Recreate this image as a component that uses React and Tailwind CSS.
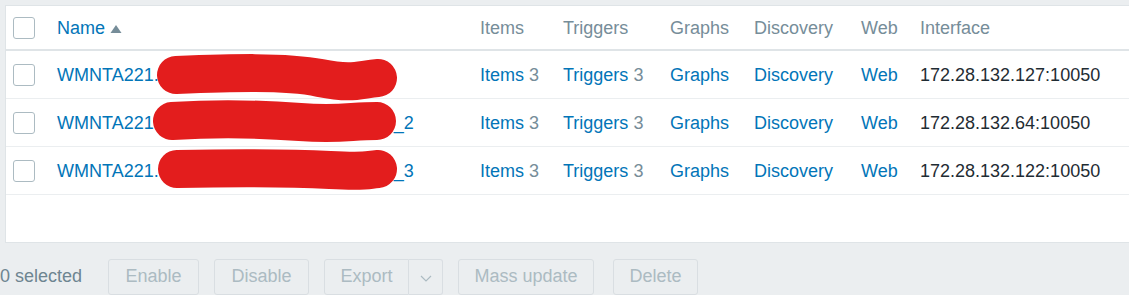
import React from "react";

const cols = "grid grid-cols-[51px_423px_83px_107px_84px_107px_59px_1fr] items-center";

function Checkbox() {
  return <div className="w-[22px] h-[22px] ml-[7px] border border-[#acbbc2] rounded-[3px] bg-white" />;
}

const rows = [
  { pre: "WMNTA221.", gap: 235, suf: "", ip: "172.28.132.127:10050" },
  { pre: "WMNTA221.", gap: 235, suf: "_2", ip: "172.28.132.64:10050" },
  { pre: "WMNTA221.", gap: 235, suf: "_3", ip: "172.28.132.122:10050" },
];

function Btn({ children, className = "" }) {
  return (
    <div className={"h-[36px] pb-[3px] flex items-center justify-center border border-[#d9dee2] rounded-[3px] text-[#acbbc2] bg-[#ebeef0] " + className}>
      {children}
    </div>
  );
}

export default function App() {
  return (
    <div
      className="relative w-full h-[295px] overflow-hidden bg-[#ebeef0] text-[18px] leading-none"
      style={{ fontFamily: '"Liberation Sans", Arial, sans-serif' }}
    >
      <div className="mt-[5px] ml-[5px] bg-white border border-r-0 border-[#dfe4e7]">
        <div className={cols + " h-[45px] border-b-2 border-[#dfe4e7] text-[#768d99]"}>
          <div><Checkbox /></div>
          <div className="flex items-center">
            <span className="text-[#0275b8]">Name</span>
            <svg width="12" height="10" viewBox="0 0 12 10" className="ml-[5px] mt-[2px]">
              <path d="M6 1 L11.5 9 L0.5 9 Z" fill="#768d99" />
            </svg>
          </div>
          <div>Items</div>
          <div>Triggers</div>
          <div>Graphs</div>
          <div>Discovery</div>
          <div>Web</div>
          <div>Interface</div>
        </div>
        {rows.map((r, i) => (
          <div key={i} className={cols + " h-[48px] border-b border-[#ebeef0]"}>
            <div><Checkbox /></div>
            <div className="flex items-center text-[#0275b8] whitespace-nowrap">
              <span>{r.pre}</span>
              <span className="inline-block" style={{ width: r.gap }} />
              <span>{r.suf}</span>
            </div>
            <div><span className="text-[#0275b8]">Items</span> <span className="text-[#768d99]">3</span></div>
            <div><span className="text-[#0275b8]">Triggers</span> <span className="text-[#768d99]">3</span></div>
            <div className="text-[#0275b8]">Graphs</div>
            <div className="text-[#0275b8]">Discovery</div>
            <div className="text-[#0275b8]">Web</div>
            <div className="text-[#1f2c33]">{r.ip}</div>
          </div>
        ))}
        <div className="h-[47px]" />
      </div>
      <div className="flex items-center mt-[16px]">
        <span className="text-[#6e8591] w-[108px] -mt-[3px]">0 selected</span>
        <Btn className="w-[91px]">Enable</Btn>
        <Btn className="w-[95px] ml-[15px]">Disable</Btn>
        <div className="flex ml-[15px]">
          <Btn className="w-[85px] rounded-r-none">Export</Btn>
          <Btn className="w-[34px] rounded-l-none border-l-0">
            <svg width="12" height="7" viewBox="0 0 12 7" className="mt-[6px]">
              <path d="M1 1 L6 6 L11 1" fill="none" stroke="#acbbc2" strokeWidth="1.2" />
            </svg>
          </Btn>
        </div>
        <Btn className="w-[136px] ml-[15px]">Mass update</Btn>
        <Btn className="w-[85px] ml-[19px]">Delete</Btn>
      </div>
      <svg className="absolute top-0 left-0 pointer-events-none" width="1129" height="295">
        <g fill="none" stroke="#e31d1d" strokeLinecap="round" strokeWidth="38">
          <path d="M176 75 C 230 73, 285 71, 320 78 S 360 79, 378 78" />
          <path d="M172 121 C 220 118, 260 119, 300 122 S 350 121, 377 121" />
          <path d="M177 169 C 230 168, 290 168, 330 170 S 365 170, 378 169" />
        </g>
      </svg>
    </div>
  );
}
